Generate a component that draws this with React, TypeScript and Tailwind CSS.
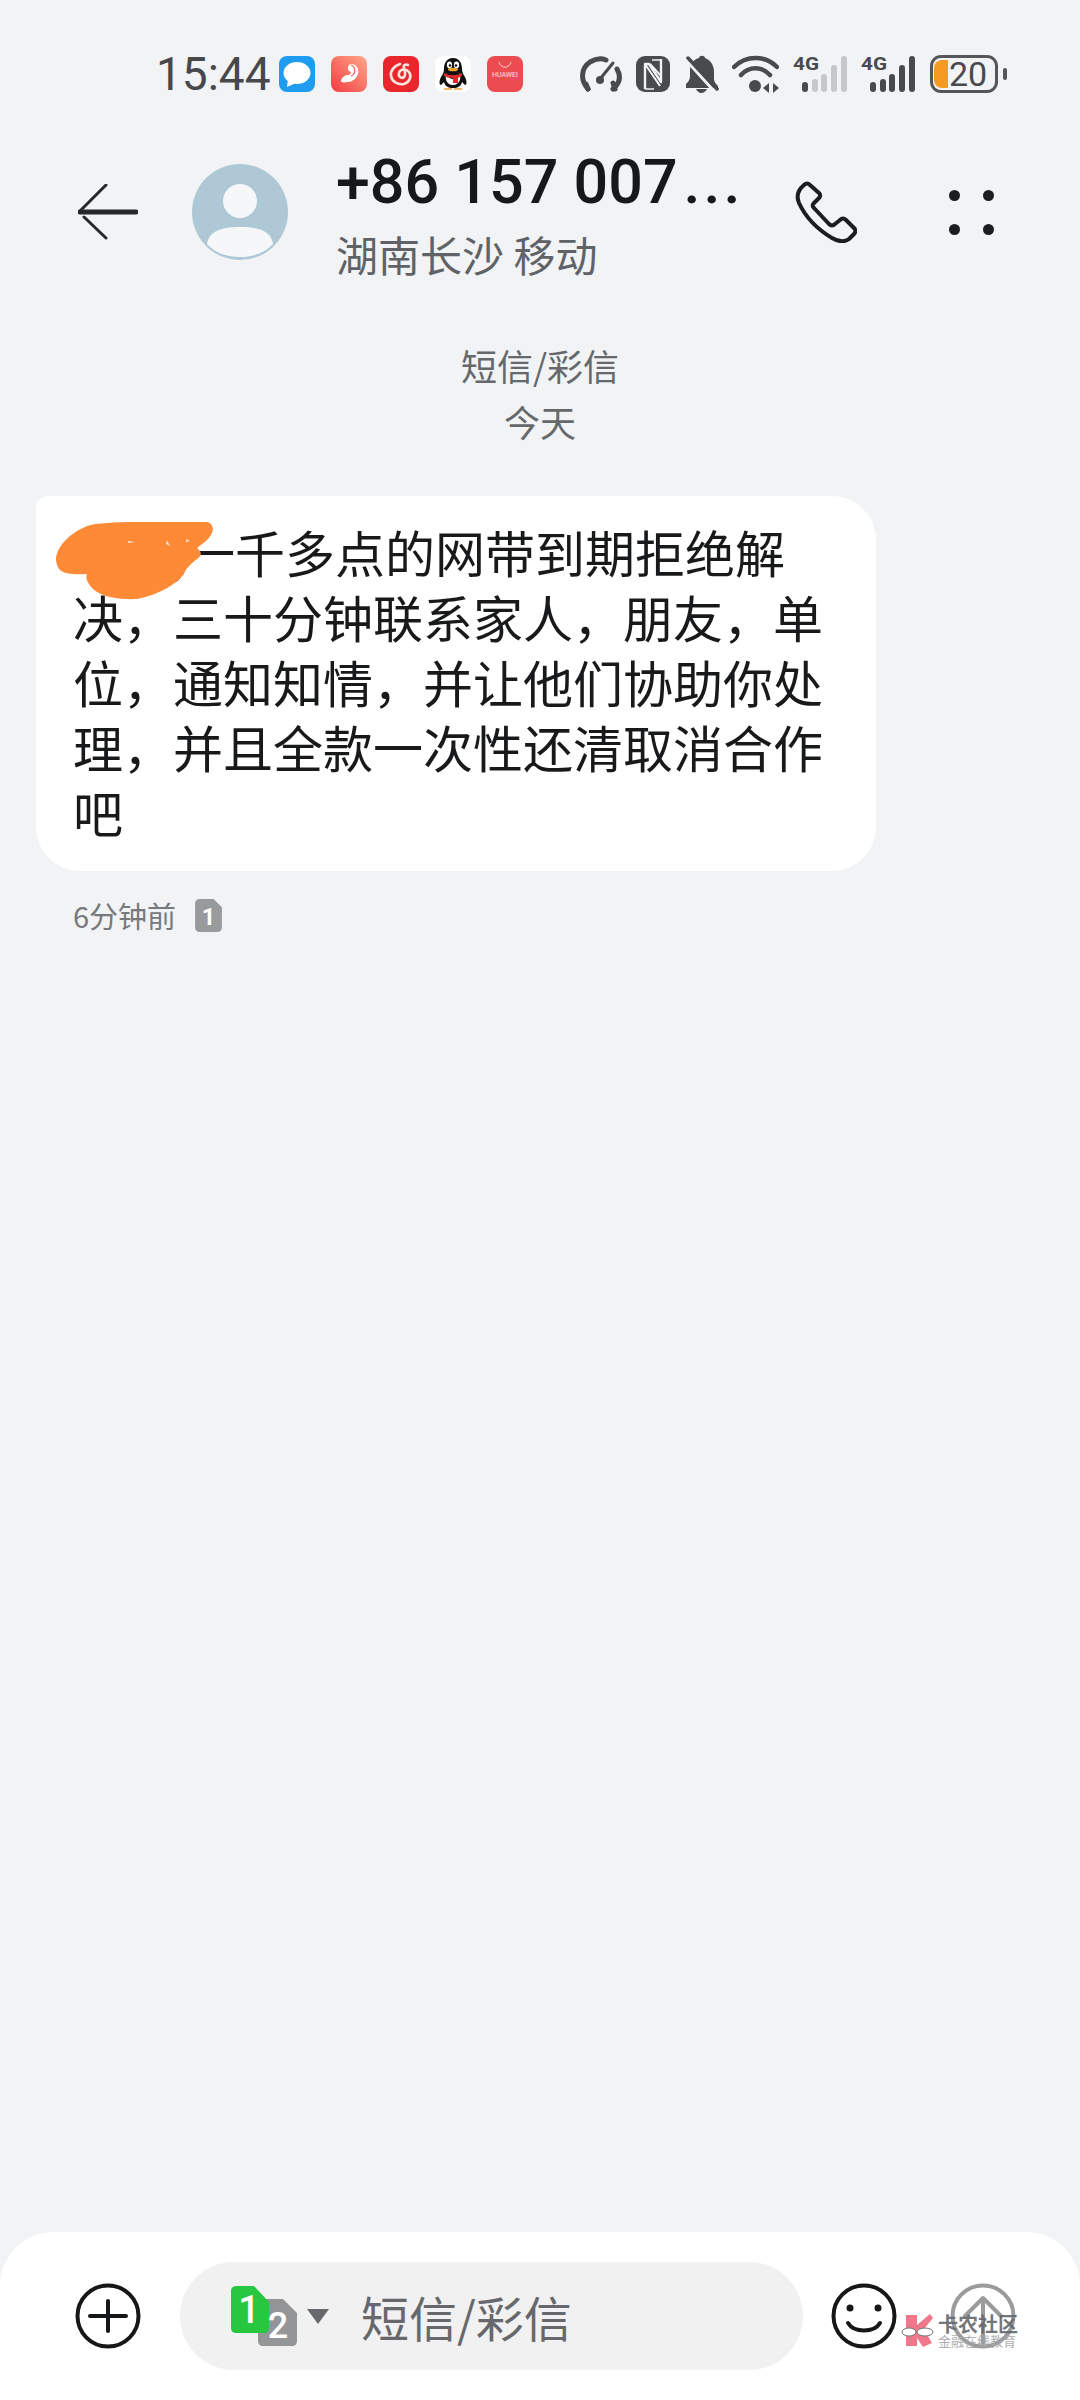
const cjk = { fontFamily: '"Noto Sans CJK SC", "Noto Sans", sans-serif' };
const num = { fontFamily: 'Roboto, "Liberation Sans", sans-serif' };

const Gauge = () => (
  <svg width="42" height="37" viewBox="0 0 42 37" fill="none" stroke="#484a4d" strokeWidth="5" strokeLinecap="round">
    <path d="M8 33 C0 24 1 12 10 6 C15 3 21 2 26 4" />
    <path d="M37 13 C41 20 40 27 33 33" />
    <path d="M35 33 L33 27 M8 33 L6 28" />
    <path d="M20 23 L33 7" strokeWidth="3" />
    <circle cx="20" cy="24" r="4" fill="#484a4d" stroke="none" />
  </svg>
);

const Nfc = () => (
  <svg width="34" height="36" viewBox="0 0 34 36" fill="none">
    <rect width="34" height="36" rx="9" fill="#484a4d" />
    <path d="M9 33 V8 H13 L25 26 V3" stroke="#f1f3f5" strokeWidth="2.4" strokeLinejoin="round" />
    <path d="M9 8 L24 30 M14 8 L25 20" stroke="#f1f3f5" strokeWidth="2" />
    <path d="M16 4 H25 M9 33 H18" stroke="#f1f3f5" strokeWidth="1.4" />
  </svg>
);

const BellMute = () => (
  <svg width="34" height="38" viewBox="0 0 34 38" fill="none">
    <path d="M14 3 C14 0 20 0 20 3 C26 5 29 11 29 17 V24 C29 27 31 29 33 31 V33 H1 V29 C3 27 5 25 5 21 V15 C5 9 9 4 14 3 Z" fill="#484a4d" />
    <path d="M11 34 H22 C21 36 19 38 16 38 C14 38 12 36 11 34 Z" fill="#484a4d" />
    <path d="M1 5 L29 36" stroke="#f1f3f5" strokeWidth="3" />
    <path d="M3 3 L32 34" stroke="#484a4d" strokeWidth="3.5" strokeLinecap="round" />
  </svg>
);

const Wifi = () => (
  <svg width="47" height="38" viewBox="0 0 47 38" fill="none" stroke="#484a4d" strokeWidth="4.5" strokeLinecap="round">
    <path d="M2 12 C14 0 33 0 45 12" />
    <path d="M9 20 C17 11 30 11 38 20" />
    <circle cx="23" cy="31" r="6" fill="#484a4d" stroke="none" />
    <path d="M37 28 V38 L31 33 Z M41 28 V38 L47 33 Z" fill="#484a4d" stroke="none" />
  </svg>
);

const Signal = ({ level }: { level: number }) => {
  const bars = [
    [9, 27, 10],
    [19, 24, 13],
    [28, 19, 18],
    [38, 10, 27],
    [48, 1, 36],
  ];
  return (
    <svg className="overflow-visible" width="54" height="38" viewBox="0 0 54 38" fill="none">
      <text x="0" y="15" fontSize="19" fontWeight="700" fill="#484a4d" textLength="26" lengthAdjust="spacingAndGlyphs" style={num}>
        4G
      </text>
      {bars.map(([x, y, h], i) => (
        <rect key={x} x={x} y={y} width="6" height={h} rx="3" fill={i < level ? "#484a4d" : "#c6c7c9"} />
      ))}
    </svg>
  );
};

const Battery = () => (
  <div className="flex items-center gap-[5px]">
    <div className="flex h-[38px] w-[68px] items-center rounded-[11px] border-[3px] border-[#55565a] pl-[1px]">
      <div className="h-[28px] w-[14px] rounded-l-[8px] bg-[#f59a23]" />
      <span className="pl-[1px] text-[34px] leading-[32px] text-[#484a4d]" style={num}>
        20
      </span>
    </div>
    <div className="h-[12px] w-[4px] rounded-full bg-[#55565a]" />
  </div>
);

const MsgIcon = () => (
  <svg width="36" height="36" viewBox="0 0 36 36">
    <rect width="36" height="36" rx="8" fill="#1f9cf0" />
    <ellipse cx="18" cy="17" rx="13.5" ry="11" fill="#fff" />
    <path d="M9 23 L8 31 L17 27 Z" fill="#fff" />
  </svg>
);

const SoulIcon = () => (
  <svg width="36" height="36" viewBox="0 0 36 36" fill="none">
    <defs>
      <linearGradient id="soul" x1="0" y1="1" x2="1" y2="0">
        <stop offset="0" stopColor="#f23b40" />
        <stop offset="1" stopColor="#ffa98a" />
      </linearGradient>
    </defs>
    <rect width="36" height="36" rx="8" fill="url(#soul)" />
    <path d="M20 8 C27 8 29 16 26 20 C24 24 20 26 16 26 C12 27 10 26 10 25 C11 20 15 19 17 19 C20 19 21 16 18 15 C16 12 17 9 20 8 Z" fill="#fff" />
    <path d="M20 9 C25 11 25 18 20 20" stroke="#f2635f" strokeWidth="1.2" />
  </svg>
);

const NeteaseIcon = () => (
  <svg width="36" height="36" viewBox="0 0 36 36" fill="none">
    <rect width="36" height="36" rx="8" fill="#e8262b" />
    <path
      d="M17 8 C11 10 7 15 8 20 C9 26 15 29 21 28 C27 26 29 20 26 16 C23 12 17 13 16 17 C15 21 19 23 21 21 C23 19 22 15 21 12 C20 9 22 8 25 9"
      stroke="#fbe4dc"
      strokeWidth="2.6"
      strokeLinecap="round"
    />
  </svg>
);

const QqIcon = () => (
  <svg width="36" height="36" viewBox="0 0 36 36">
    <rect width="36" height="36" rx="8" fill="#fff" />
    <path d="M18 2 C11 2 9 8 9 13 C9 16 8 18 6 21 C4 25 4 29 6 29 L9 26 C10 30 13 32 18 32 C23 32 26 30 27 26 L30 29 C32 29 32 25 30 21 C28 18 27 16 27 13 C27 8 25 2 18 2 Z" fill="#111" />
    <path d="M11 17 C14 25 22 25 25 17 C26 22 25 29 18 29 C11 29 10 22 11 17 Z" fill="#fff" />
    <ellipse cx="14.5" cy="9" rx="2.6" ry="3.4" fill="#fff" />
    <ellipse cx="21.5" cy="9" rx="2.6" ry="3.4" fill="#fff" />
    <circle cx="15" cy="9.5" r="1.3" fill="#111" />
    <circle cx="21" cy="9.5" r="1.3" fill="#111" />
    <ellipse cx="18" cy="13.5" rx="5" ry="1.8" fill="#f2a42c" />
    <path d="M9 17 C14 20 22 20 27 17 L27 20 C24 21 23 22 23 22 L23 27 L18 27 L18 22 C14 22 11 21 9 20 Z" fill="#e0272b" />
    <path d="M9 32 H17 V34 H9 Z M19 32 H27 V34 H19 Z" fill="#f4b860" />
  </svg>
);

const HuaweiIcon = () => (
  <div className="flex h-[36px] w-[36px] flex-col items-center rounded-[8px] bg-[#ea4c52] pt-[5px]">
    <svg width="14" height="8" viewBox="0 0 14 8" fill="none" stroke="#fff" strokeWidth="0.9" opacity="0.85">
      <path d="M1 1 C3 8 11 8 13 1" />
    </svg>
    <span className="mt-[2px] text-[7px] leading-[9px] text-[#ffe3e3]" style={num}>
      HUAWEI
    </span>
  </div>
);

const StatusBar = () => (
  <div className="flex h-[38px] items-center pl-[156px]">
    <span className="w-[123px] text-[46px] leading-none text-[#46484b]" style={num}>
      15:44
    </span>
    <div className="flex w-[301px] gap-[16px]">
      <MsgIcon />
      <SoulIcon />
      <NeteaseIcon />
      <QqIcon />
      <HuaweiIcon />
    </div>
    <div className="flex items-center">
      <Gauge />
      <div className="ml-[14px]">
        <Nfc />
      </div>
      <div className="ml-[15px]">
        <BellMute />
      </div>
      <div className="ml-[13px]">
        <Wifi />
      </div>
      <div className="ml-[14px]">
        <Signal level={1} />
      </div>
      <div className="ml-[14px]">
        <Signal level={5} />
      </div>
      <div className="ml-[15px]">
        <Battery />
      </div>
    </div>
  </div>
);

const Header = () => (
  <div className="mt-[49px] flex h-[140px] items-center pl-[78px]">
    <svg width="60" height="56" viewBox="0 0 60 56" fill="none" stroke="#26282b" strokeLinecap="round">
      <path d="M28 1 L2 27" strokeWidth="3" />
      <path d="M6 33 L28 54" strokeWidth="3" />
      <path d="M2 28 H58" strokeWidth="5" />
    </svg>
    <svg className="ml-[54px]" width="96" height="96" viewBox="0 0 96 96">
      <circle cx="48" cy="48" r="48" fill="#aec8d6" />
      <ellipse cx="48" cy="37" rx="17" ry="17" fill="#f5f7f9" />
      <path d="M15 80 C17 66 32 63 48 63 C64 63 79 66 81 80 C73 89 61 93 48 93 C35 93 23 89 15 80 Z" fill="#f5f7f9" />
    </svg>
    <div className="ml-[48px] flex w-[459px] flex-col">
      <div className="mt-[2px] h-[70px] whitespace-nowrap text-[61px] font-medium leading-[70px] text-[#16181a]" style={num}>
        +86 157 007<span className="ml-[6px] tracking-[3px]">...</span>
      </div>
      <div className="mt-[12px] h-[50px] text-[42px] leading-[50px] text-[#5f6266]" style={cjk}>
        湖南长沙 移动
      </div>
    </div>
    <svg width="62" height="62" viewBox="-2 -2 62 62" fill="none" stroke="#1b1d1f" strokeWidth="4" strokeLinejoin="round">
      <path d="M7 2 C9 0 11 0 13 2 L22 10 C24 12 23 14 22 15 L17 20 C15 22 15 23 17 25 L32 41 C34 43 36 43 38 41 L43 37 C45 35 47 35 49 37 L57 45 C59 47 59 49 57 51 L52 56 C48 59 42 59 35 55 C20 46 8 33 2 20 C-1 13 1 7 7 2 Z" />
    </svg>
    <div className="ml-[92px] grid grid-cols-2 gap-x-[23px] gap-y-[23px]">
      <div className="h-[11px] w-[11px] rounded-full bg-[#1b1d1f]" />
      <div className="h-[11px] w-[11px] rounded-full bg-[#1b1d1f]" />
      <div className="h-[11px] w-[11px] rounded-full bg-[#1b1d1f]" />
      <div className="h-[11px] w-[11px] rounded-full bg-[#1b1d1f]" />
    </div>
  </div>
);

const Blob = () => (
  <svg className="absolute left-[20px] top-[26px]" width="158" height="78" viewBox="0 0 158 78">
    <path
      d="M0 37 C1 24 14 11 31 4 C40 1 60 0 80 0 L150 0 C156 0 158 6 156 11 C152 19 146 22 141 26 C146 30 146 34 141 37 C135 42 130 46 128 52 C120 62 105 72 81 77 C60 78 40 74 33 62 C30 57 30 55 31 52 C20 53 7 52 3 47 C1 44 0 40 0 37 Z"
      fill="#ff8a36"
    />
    <path d="M72 19 L79 20 L72 21 Z M111 18 L114 24 L110 22 Z M130 17 L134 19 L130 20 Z" fill="#fbe3cf" />
  </svg>
);

const Bubble = () => (
  <div className="relative ml-[36px] mt-[47px] w-[840px] rounded-[44px] rounded-tl-[12px] bg-white pb-[27px] pl-[37px] pr-[48px] pt-[23px]">
    <p className="text-[50px] leading-[65px] text-[#17191b]" style={cjk}>
      <span className="inline-block w-[98px]" />
      ,一千多点的网带到期拒绝解决，三十分钟联系家人，朋友，单位，通知知情，并让他们协助你处理，并且全款一次性还清取消合作吧
    </p>
    <Blob />
  </div>
);

const SimBadge = () => (
  <svg width="27" height="33" viewBox="0 0 26 32">
    <path d="M4 0 H18 L26 8 V28 C26 30 24 32 22 32 H4 C2 32 0 30 0 28 V4 C0 2 2 0 4 0 Z" fill="#999a9c" />
    <text x="13" y="25" textAnchor="middle" fontSize="23" fontWeight="700" fill="#fff" style={num}>
      1
    </text>
  </svg>
);

const SimSwitch = () => (
  <svg width="66" height="60" viewBox="0 0 66 60">
    <path d="M27 13 H52 L66 27 V55 C66 58 64 60 61 60 H32 C29 60 27 58 27 55 Z" fill="#949597" />
    <path d="M5 0 H23 L38 16 V42 C38 45 36 47 33 47 H5 C2 47 0 45 0 42 V5 C0 2 2 0 5 0 Z" fill="#27c73f" />
    <text x="18" y="37" textAnchor="middle" fontSize="38" fontWeight="500" fill="#fff" style={num}>
      1
    </text>
    <text x="47" y="52" textAnchor="middle" fontSize="36" fontWeight="500" fill="#fff" style={num}>
      2
    </text>
  </svg>
);

const Watermark = () => (
  <div className="absolute left-[901px] top-[81px] flex items-start opacity-90">
    <svg width="34" height="36" viewBox="0 0 34 36">
      <path d="M5 2 H16 V12 L29 1 L32 5 L23 16 L31 30 L22 34 L16 25 V33 H5 Z" fill="#f06a7e" />
      <ellipse cx="8" cy="19" rx="7" ry="4" fill="#fff" stroke="#666" strokeWidth="1" />
      <ellipse cx="24" cy="19" rx="8" ry="4" fill="#fff" stroke="#666" strokeWidth="1" />
    </svg>
    <div className="ml-[3px] flex flex-col" style={cjk}>
      <span className="text-[20px] font-bold leading-[21px] text-[#66686b]">卡农社区</span>
      <span className="text-[13px] leading-[14px] text-[#a5a7a9]">金融在线教育</span>
    </div>
  </div>
);

const Composer = () => (
  <div className="relative mt-auto flex h-[168px] items-start rounded-t-[54px] bg-white pl-[75px] pt-[30px]">
    <svg className="mt-[21px]" width="66" height="66" viewBox="0 0 66 66" fill="none" stroke="#151719" strokeLinecap="round">
      <circle cx="33" cy="33" r="30.5" strokeWidth="4" />
      <path d="M33 18 V48 M15 33 H51" strokeWidth="4" />
    </svg>
    <div className="ml-[39px] flex h-[108px] w-[623px] items-center rounded-full bg-[#f1f1f2] pl-[51px]">
      <SimSwitch />
      <svg className="ml-[10px]" width="22" height="15" viewBox="0 0 22 15">
        <path d="M0 0 H22 L11 15 Z" fill="#66686b" />
      </svg>
      <span className="ml-[32px] text-[48px] leading-none text-[#66686b]" style={cjk}>
        短信/彩信
      </span>
    </div>
    <svg className="ml-[28px] mt-[21px]" width="66" height="66" viewBox="0 0 66 66" fill="none" stroke="#151719" strokeLinecap="round">
      <circle cx="33" cy="33" r="30.5" strokeWidth="4" />
      <circle cx="19" cy="25" r="3.5" fill="#151719" stroke="none" />
      <circle cx="47" cy="25" r="3.5" fill="#151719" stroke="none" />
      <path d="M17 40 C23 50 43 50 49 40" strokeWidth="4" />
    </svg>
    <svg className="ml-[53px] mt-[21px]" width="66" height="66" viewBox="0 0 66 66" fill="none" stroke="#9a9b9d" strokeLinecap="round" strokeLinejoin="round">
      <circle cx="33" cy="33" r="30.5" strokeWidth="4" />
      <path d="M33 60 V16 M15 33 L33 15 L51 33" strokeWidth="4" />
    </svg>
    <Watermark />
  </div>
);

const App = () => {
  return (
    <div className="flex h-[2400px] w-[1080px] flex-col bg-[#f1f3f5] pt-[55px]">
      <StatusBar />
      <Header />
      <div className="mt-[55px] flex flex-col items-center text-[36px] leading-[56px] text-[#66696c]" style={cjk}>
        <span>短信/彩信</span>
        <span>今天</span>
      </div>
      <Bubble />
      <div className="ml-[73px] mt-[24px] flex h-[40px] items-center">
        <span className="text-[29px] leading-[40px] text-[#77797c]" style={cjk}>
          6分钟前
        </span>
        <div className="ml-[19px]">
          <SimBadge />
        </div>
      </div>
      <Composer />
    </div>
  );
};

export default App;
